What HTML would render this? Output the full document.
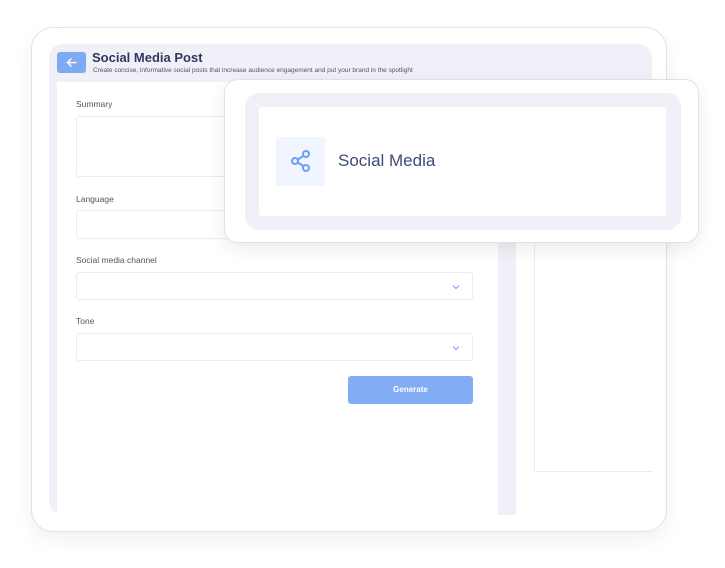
<!DOCTYPE html>
<html><head><style>
*{margin:0;padding:0;box-sizing:border-box}
body{width:725px;height:568px;background:#fff;position:relative;overflow:hidden;font-family:"Liberation Sans",sans-serif}
.a{position:absolute}
.lbl{font-size:8.5px;color:#555}
.inp{background:#fff;border:1px solid #ececf0;border-radius:3px}
</style></head><body>
<div class="a" style="left:31px;top:27px;width:636px;height:505px;border:1px solid #e2e2e6;border-radius:22px;box-shadow:0 8px 20px rgba(0,0,0,0.06);background:#fff;overflow:hidden">
 <div class="a" style="left:17px;top:16px;width:603px;height:471px;background:#f0f0f8;border-radius:14px 14px 0 14px"></div>
 <div class="a" style="left:25px;top:54px;width:441px;height:433px;background:#fff"></div>
 <div class="a" style="left:484px;top:54px;width:136px;height:433px;background:#fff"></div>
 <div class="a" style="left:484px;top:480px;width:150px;height:30px;background:#fff"></div>
 <div class="a" style="left:502px;top:212px;width:118px;height:232px;border:1px solid #ececf0;border-right:none"></div>
 <div class="a" style="left:25px;top:24px;width:29px;height:21px;background:#7eaaf3;border-radius:3px">
  <svg class="a" style="left:9px;top:5px" width="11" height="11" viewBox="0 0 12 12" fill="none" stroke="#fff" stroke-width="1.5" stroke-linecap="round" stroke-linejoin="round"><path d="M11 6H1.5M5.5 2L1.5 6l4 4"/></svg>
 </div>
 <div class="a" style="left:60px;top:22px;font-size:13px;font-weight:bold;color:#2e3a5c">Social Media Post</div>
 <div class="a" style="left:61px;top:39px;font-size:6.5px;color:#555">Create concise, informative social posts that increase audience engagement and put your brand in the spotlight</div>
 <div class="a lbl" style="left:44px;top:71px">Summary</div>
 <div class="a inp" style="left:44px;top:88px;width:397px;height:61px"></div>
 <div class="a lbl" style="left:44px;top:166px">Language</div>
 <div class="a inp" style="left:44px;top:182px;width:397px;height:29px"></div>
 <div class="a lbl" style="left:44px;top:227px">Social media channel</div>
 <div class="a inp" style="left:44px;top:244px;width:397px;height:28px"><svg class="a" style="right:12px;top:11px" width="8" height="6" viewBox="0 0 8 6" fill="none" stroke="#7eaaf3" stroke-width="1.2"><path d="M1 1.5l3 3 3-3"/></svg></div>
 <div class="a lbl" style="left:44px;top:288px">Tone</div>
 <div class="a inp" style="left:44px;top:305px;width:397px;height:28px"><svg class="a" style="right:12px;top:11px" width="8" height="6" viewBox="0 0 8 6" fill="none" stroke="#7eaaf3" stroke-width="1.2"><path d="M1 1.5l3 3 3-3"/></svg></div>
 <div class="a" style="left:316px;top:348px;width:125px;height:28px;background:#82acf3;border-radius:3px;color:#fff;font-size:8px;font-weight:bold;text-align:center;line-height:28px">Generate</div>
</div>
<div class="a" style="left:224px;top:79px;width:475px;height:164px;background:#fff;border:1px solid #e0e0e6;border-radius:14px;box-shadow:0 6px 18px rgba(0,0,0,0.08)">
 <div class="a" style="left:20px;top:13px;width:436px;height:137px;background:#f0f0f8;border-radius:14px"></div>
 <div class="a" style="left:34px;top:27px;width:407px;height:109px;background:#fff;border-radius:3px"></div>
 <div class="a" style="left:51px;top:57px;width:49px;height:49px;background:#f0f5ff;border-radius:3px">
  <svg class="a" style="left:13px;top:12px" width="24" height="24" viewBox="0 0 24 24" fill="none" stroke="#6f9ef0" stroke-width="2"><circle cx="17" cy="5" r="3"/><circle cx="6" cy="12" r="3"/><circle cx="17" cy="19" r="3"/><path d="M8.6 10.5l5.8-3.5M8.6 13.5l5.8 3.5"/></svg>
 </div>
 <div class="a" style="left:113px;top:71px;font-size:17px;color:#3d4a7a">Social Media</div>
</div>
</body></html>
